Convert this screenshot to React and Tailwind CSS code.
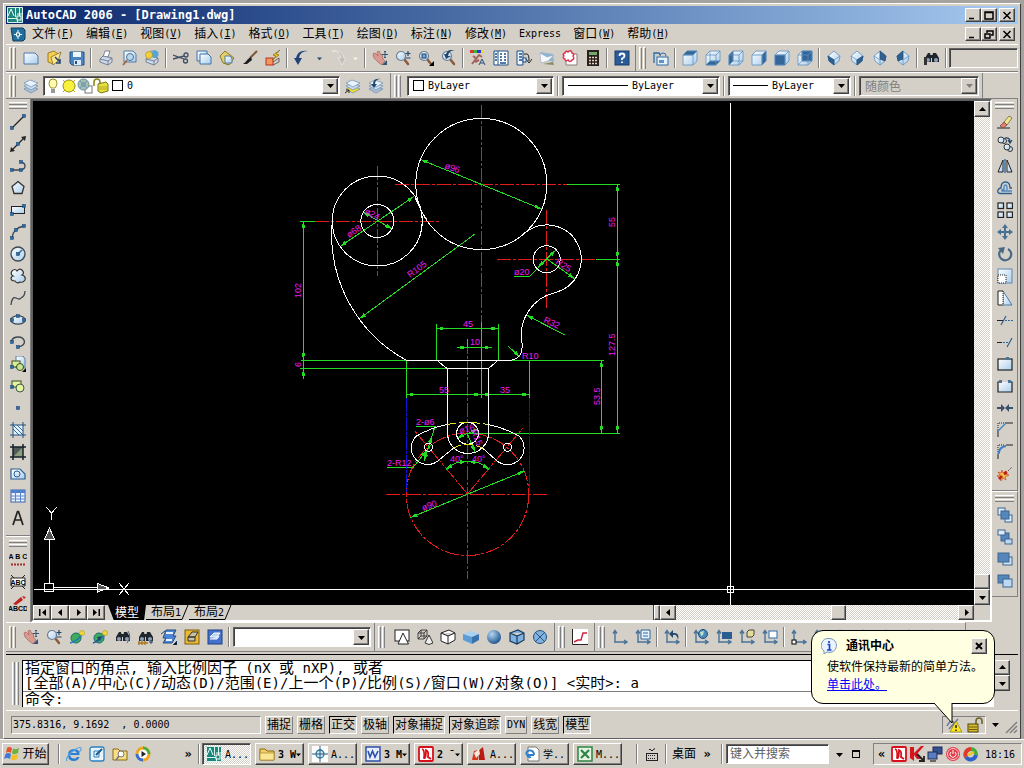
// src/App.jsx
import React from "react";

const raised =
  "border border-t-white border-l-white border-r-[#404040] border-b-[#404040] bg-[#d4d0c8] shadow-[inset_-1px_-1px_0_#808080]";
const sunken =
  "border border-t-[#606060] border-l-[#606060] border-r-white border-b-white shadow-[inset_1px_1px_0_#404040]";
const track =
  "bg-[repeating-conic-gradient(#ffffff_0_25%,#d4d0c8_0_50%)] bg-[length:2px_2px]";

/* ---------- ICON PARTS ---------- */

const Cube = ({ face }) => {
  const faces = {
    top: "1,5 5,1 15,1 11,5",
    bottom: "1,15 5,11 15,11 11,15",
    left: "1,5 5,1 5,11 1,15",
    right: "11,5 15,1 15,11 11,15",
    front: "1,5 11,5 11,15 1,15",
    back: "5,1 15,1 15,11 5,11",
  };
  return (
    <g stroke="#5f8fbd" strokeWidth="0.8" strokeLinejoin="round">
      <path d="M1 5L5 1H15V11L11 15H1Z" fill="url(#ice)" />
      <polygon points={faces[face]} fill="#336699" />
      <path d="M1 5H11V15M11 5L15 1" fill="none" />
      {(face === "bottom" || face === "left" || face === "back") && (
        <path d="M5 1V11H15M5 11L1 15" fill="none" strokeWidth="0.7" />
      )}
    </g>
  );
};

const Iso = ({ face }) => {
  const faces = {
    sw: "2,6 8,10 8,15 3,11",
    se: "8,10 14,6 13,11 8,15",
    ne: "8,1 14,6 13,11 8,9",
    nw: "8,1 2,6 3,11 8,9",
  };
  return (
    <g stroke="#5f8fbd" strokeWidth="0.8" strokeLinejoin="round">
      <path d="M8 1L14 6L13 11L8 15L3 11L2 6Z" fill="url(#ice)" />
      <path d="M2 6L8 10L14 6M8 10V15" fill="none" />
      <polygon points={faces[face]} fill="#2f6090" stroke="#27527d" />
    </g>
  );
};

const Axes = ({ children }) => (
  <g>
    <path
      d="M3 14V2M1 4.500L3 1.500L5 4.500M3 13H14M12 11L15 13L12 15"
      fill="none"
      stroke="#4a7399"
      strokeWidth="1.400"
    />
    {children}
  </g>
);

const Dot = ({ x, y }) => (
  <rect x={x - 1.5} y={y - 1.5} width="3" height="3" fill="#2b6ba8" stroke="#163f66" strokeWidth="0.5" />
);

const Lens = ({ children }) => (
  <g>
    <path d="M9 9L13 14" stroke="#8a5a3a" strokeWidth="2.500" strokeLinecap="round" />
    <circle cx="6" cy="6" r="4.500" fill="url(#ice)" stroke="#6d7f92" strokeWidth="1.200" />
    {children}
  </g>
);

const Hand = () => (
  <g>
    <path d="M1 4L3 3L6 6L5 2L7 1L9 5L10 4L11 9L13 11L10 15L6 12L2 8Z" fill="#d99a90" stroke="#a4605c" strokeWidth="0.7" />
    <path d="M10 15L15 10L15 15Z" fill="#34557a" />
    <path d="M13 1V8M10 4.500H16M12 2L13 1L14 2M12 7L13 8L14 7" stroke="#34557a" fill="none" />
  </g>
);

const Printer = () => (
  <g stroke="#5d6f88" strokeWidth="0.800">
    <path d="M5 7L7 1H12L10 7Z" fill="#fff" />
    <path d="M2 9L5 6L14 8L14 12L10 15L2 12Z" fill="#cfd8e6" />
    <path d="M2 9L10 11L14 8M10 11V15" fill="none" />
  </g>
);

const Binoculars = () => (
  <g fill="#20262e">
    <path d="M1 8L4 3H6L7 8V12H1ZM8 8L9 3H12L15 8V12H8Z" />
    <circle cx="4" cy="10" r="2" fill="#8fa0b5" />
    <circle cx="12" cy="10" r="2" fill="#8fa0b5" />
    <path d="M6 5H10V8H6Z" />
  </g>
);

const Globe = () => (
  <g>
    <circle cx="7" cy="9" r="5" fill="#3cae5a" stroke="#1c6c6c" />
    <path d="M1 14Q9 12 14 4" fill="none" stroke="#2878b8" strokeWidth="1.500" />
    <circle cx="13" cy="4" r="2.500" fill="#eedb3a" stroke="#a88a10" strokeWidth="0.500" />
  </g>
);

const Stack = ({ top }) => (
  <g stroke="#6a8bb0" strokeWidth="0.700">
    <path d="M1 11L7 8L15 11L8 15Z" fill={top || "#aebfd4"} />
    <path d="M1 8L7 5L15 8L8 12Z" fill="#c9dcf0" />
    <path d="M1 5L7 2L15 5L8 9Z" fill="#e8f3fc" />
  </g>
);

const ICONS = {
  new: <path d="M1 3H12L15 6V14H1Z" fill="url(#ice)" stroke="#4f7aa8" />,
  open: (
    <g stroke="#8a6a14" strokeWidth="0.800">
      <path d="M2 3L8 1L12 4L7 14L2 12Z" fill="#f3cf55" />
      <path d="M5 7L15 2L12 11L7 15Z" fill="#fbe694" />
      <path d="M9 7L14 12M14 9V13H10" stroke="#23476e" strokeWidth="1.500" fill="none" />
    </g>
  ),
  save: (
    <g>
      <path d="M1 2H15V15H3L1 13Z" fill="#4b84c4" stroke="#24507f" />
      <rect x="4" y="2" width="8" height="5" fill="#eef6ff" />
      <rect x="5" y="10" width="7" height="5" fill="#dbe8f5" />
      <rect x="6" y="11" width="2" height="3" fill="#24507f" />
    </g>
  ),
  print: <Printer />,
  preview: (
    <g>
      <path d="M3 1H12L15 4V12H3Z" fill="url(#ice)" stroke="#4f7aa8" />
      <circle cx="9" cy="7" r="3.500" fill="#b8d8f0" stroke="#56708c" />
      <path d="M6 10L2 15" stroke="#a06a4a" strokeWidth="2" />
    </g>
  ),
  publish: (
    <g>
      <Printer />
      <circle cx="11" cy="4" r="3.500" fill="#53a6dc" />
      <circle cx="5" cy="5" r="3.500" fill="#f2d13d" stroke="#a68513" strokeWidth="0.600" />
    </g>
  ),
  cut: (
    <g fill="none" stroke="#3f4f66" strokeWidth="1.300">
      <path d="M0 5L11 9M0 9L11 6" />
      <circle cx="13" cy="5" r="2" />
      <circle cx="12.500" cy="11" r="2" />
    </g>
  ),
  copy: (
    <g fill="url(#ice)" stroke="#3f74aa">
      <path d="M1 1H11V11H1Z" />
      <path d="M4 4H12L15 7V14H4Z" />
    </g>
  ),
  paste: (
    <g>
      <path d="M1 6L6 1L15 8L10 15L4 13Z" fill="#e3cf67" stroke="#8d7a24" />
      <path d="M6 6H11L13 8V13H6Z" fill="url(#ice)" stroke="#4f7aa8" />
    </g>
  ),
  match: (
    <g>
      <path d="M15 1L8 8" stroke="#7d5a3a" strokeWidth="2.200" />
      <path d="M9 7L10 10L5 14L1 14Q4 12 6 9Z" fill="#1d1d1d" />
    </g>
  ),
  block: (
    <g>
      <rect x="1" y="8" width="7" height="7" fill="#f5945e" stroke="#b8331c" />
      <path d="M15 0L8 5L11 6L7 10L14 5L11 4Z" fill="#f8d11e" stroke="#7d6a0a" strokeWidth="0.700" />
      <path d="M8 12L14 8V12L8 15" fill="none" stroke="#333" strokeWidth="0.700" />
    </g>
  ),
  undo: <path d="M14 1Q6 1 5 8H8L4 15L0 8H2Q4 -1 14 1Z" fill="#1f4379" />,
  redo: <path d="M2 1Q10 1 11 8H8L12 15L16 8H14Q12 -1 2 1Z" fill="#c2c0bb" stroke="#f4f4f2" strokeWidth="0.600" />,
  pan: <Hand />,
  zoom: (
    <Lens>
      <path d="M13 1V6M10.500 3.500H15.500M10.500 8H15.500" stroke="#23476e" strokeWidth="1.200" />
    </Lens>
  ),
  zoomWin: (
    <Lens>
      <rect x="4" y="4" width="4" height="4" fill="#6fa8dc" stroke="#23476e" />
      <path d="M16 11V16H11Z" fill="#000" />
    </Lens>
  ),
  zoomPrev: (
    <Lens>
      <path d="M14 1Q8 0 7 6H10L5 9L3 4H5Q7 -2 14 1Z" fill="#23476e" />
    </Lens>
  ),
  props: (
    <g>
      <rect x="0" y="0" width="4" height="3" fill="#d33" />
      <rect x="4" y="0" width="3" height="3" fill="#3b3" />
      <rect x="7" y="0" width="4" height="3" fill="#33d" />
      <rect x="11" y="0" width="3" height="3" fill="#ed2" />
      <path d="M2 14L9 5L12 7M3 6L7 9M5 12L9 10" stroke="#a7615a" strokeWidth="2" fill="none" />
      <path d="M9 15L12 9L15 15M10 13H14" fill="none" stroke="#2e4e7e" />
    </g>
  ),
  center: (
    <g fill="#fff" stroke="#1d4f86">
      <path d="M1 1H15V15H1ZM5 1V15" />
      <path d="M7 4H9M11 4H13M7 7H9M11 7H13M7 10H9M11 10H13M2 4H4M2 7H4M2 10H4M7 13H13" strokeWidth="1.300" />
    </g>
  ),
  palette: (
    <g fill="#eaf4ff" stroke="#1d4f86">
      <path d="M1 1H7V15H1Z" />
      <path d="M3 4H6M3 7H6M3 10H6" strokeWidth="1.500" />
      <path d="M8 4H11Q13 4 13 11M10 9L13 13L16 9" fill="none" stroke="#222" />
      <rect x="7" y="8" width="3" height="4" />
    </g>
  ),
  sheet: (
    <g>
      <path d="M1 2L14 4L15 12L3 9Z" fill="#8fb4d4" />
      <path d="M1 3L8 7L15 5L9 11L2 13Z" fill="#f5fafc" stroke="#8a9db0" strokeWidth="0.500" />
      <path d="M4 14L14 12L15 15Z" fill="#8a8a68" />
    </g>
  ),
  markup: (
    <g>
      <path d="M4 4H15V15H4Z" fill="#fff" stroke="#8d7b7b" />
      <path d="M3 3Q4 0 6 2Q9 -1 10 3Q13 4 11 6Q13 9 10 10Q8 13 6 10Q3 12 3 9Q0 8 2 6Q0 4 3 3Z" fill="#fff" stroke="#e0304a" strokeWidth="1.400" />
    </g>
  ),
  calc: (
    <g>
      <rect x="2" y="0" width="12" height="16" fill="#26211f" />
      <rect x="4" y="2" width="8" height="3" fill="#73a86c" />
      <path d="M4 7.500H12M4 10.500H12M4 13.500H12" stroke="#f0d0c0" strokeWidth="1.500" strokeDasharray="2 1" />
    </g>
  ),
  help: (
    <g>
      <rect x="1" y="1" width="14" height="14" fill="#2a5d98" stroke="#163f6b" />
      <path d="M5.500 6Q5.500 3.500 8 3.500Q10.500 3.500 10.500 6Q10.500 7.500 8 8.500V10M8 11.500V13" fill="none" stroke="#fff" strokeWidth="1.800" />
    </g>
  ),
  views: (
    <g>
      <path d="M1 13V3H6L7 5" fill="none" stroke="#2b6ba8" strokeWidth="1.300" />
      <rect x="4" y="7" width="11" height="8" fill="#e5f1fb" stroke="#2b6ba8" />
      <path d="M7 6Q7 3 10 3T13 6" fill="none" stroke="#2b6ba8" />
      <rect x="6" y="10" width="5" height="3" fill="#5d94c8" />
    </g>
  ),
  vTop: <Cube face="top" />,
  vBottom: <Cube face="bottom" />,
  vLeft: <Cube face="left" />,
  vRight: <Cube face="right" />,
  vFront: <Cube face="front" />,
  vBack: <Cube face="back" />,
  isoSW: <Iso face="sw" />,
  isoSE: <Iso face="se" />,
  isoNE: <Iso face="ne" />,
  isoNW: <Iso face="nw" />,
  camera: (
    <g>
      <Binoculars />
      <path d="M0 7H3V15H0Z" fill="#333" />
    </g>
  ),
  layers: <Stack />,
  layerMake: (
    <g>
      <Stack top="#f3dc2c" />
      <path d="M0 15L4 12M1 12H4V15" stroke="#222" fill="none" />
    </g>
  ),
  layerPrev: (
    <g>
      <Stack />
      <path d="M13 1Q7 1 7 6H9L6 10L3 6H5Q5 0 13 1Z" fill="#23476e" />
    </g>
  ),
  bulb: (
    <g>
      <path d="M8 1Q12 1 12 5Q12 8 10 10H6Q4 8 4 5Q4 1 8 1Z" fill="#fffbb0" stroke="#a28f28" />
      <path d="M6 12H10M6 14H10" stroke="#777" strokeWidth="1.500" />
    </g>
  ),
  sun: (
    <g>
      <path d="M2 2L14 14M14 2L2 14" stroke="#c2a90c" />
      <circle cx="8" cy="8" r="6" fill="#f7f03c" stroke="#93901d" />
    </g>
  ),
  freeze: (
    <g>
      <rect x="8" y="8" width="7" height="7" fill="#fff" stroke="#777" />
      <circle cx="6.500" cy="6.500" r="5.500" fill="#a3bfb8" stroke="#6f9096" />
      <path d="M3 3L10 10M10 3L3 10" stroke="#6e97af" />
      <circle cx="6.500" cy="6.500" r="2.500" fill="#7ea0ac" />
    </g>
  ),
  lock: (
    <g>
      <path d="M1 8V4Q1 1 4 1T7 4V6" fill="none" stroke="#8f8a1c" strokeWidth="1.600" />
      <path d="M5 6L13 4L15 6V13L8 15L5 13Z" fill="#e8e03a" stroke="#7d7714" />
      <path d="M6 9H14M6 11H14" stroke="#9d961c" strokeWidth="0.700" />
    </g>
  ),
  line: (
    <g>
      <path d="M2 14L14 2" stroke="#222" strokeWidth="1.300" />
      <Dot x={2} y={14} />
      <Dot x={14} y={2} />
    </g>
  ),
  xline: (
    <g>
      <path d="M2 14L14 2" stroke="#222" strokeWidth="1.300" />
      <path d="M0 16L1 11L5 15ZM16 0L11 1L15 5Z" fill="#222" />
      <Dot x={8} y={8} />
    </g>
  ),
  pline: (
    <g>
      <path d="M1 12H11M11 12Q15 11 15 8T11 4" fill="none" stroke="#3d4650" strokeWidth="1.300" />
      <Dot x={2} y={12} />
      <Dot x={11} y={12} />
      <Dot x={11} y={4} />
    </g>
  ),
  polygon: <path d="M8 1.500L14 6.500L12 13.500H4L2 6.500Z" fill="url(#ice)" stroke="#333" strokeWidth="1.300" />,
  rect: (
    <g>
      <rect x="1.500" y="4.500" width="13" height="7" fill="url(#ice)" stroke="#222" />
      <Dot x={2} y={12} />
      <Dot x={14} y={4} />
    </g>
  ),
  arc: (
    <g>
      <path d="M2 14Q3 4 14 2" fill="none" stroke="#3d4650" strokeWidth="1.300" />
      <Dot x={2} y={14} />
      <Dot x={6} y={6} />
      <Dot x={14} y={2} />
    </g>
  ),
  circle: (
    <g>
      <circle cx="8" cy="8" r="7" fill="url(#ice)" stroke="#3d4650" strokeWidth="1.300" />
      <path d="M8 8L12 4" stroke="#2b6ba8" strokeWidth="1.400" />
      <Dot x={8} y={8} />
    </g>
  ),
  cloud: (
    <path d="M3 8Q0 6 2 3Q5 0 7 3Q9 0 12 2Q15 5 12 7Q16 8 15 12Q13 15 10 14Q7 16 5 13Q1 13 1 10Q2 8 3 8Z" fill="url(#ice)" stroke="#333" strokeWidth="1.200" />
  ),
  spline: <path d="M1 15Q2 6 6 8T11 8Q15 6 15 1" fill="none" stroke="#3d4650" strokeWidth="1.300" />,
  ellipse: (
    <g>
      <ellipse cx="8" cy="8" rx="7" ry="4.200" fill="url(#ice)" stroke="#3d4650" strokeWidth="1.300" />
      <Dot x={2} y={8} />
      <Dot x={14} y={8} />
      <Dot x={8} y={4} />
    </g>
  ),
  earc: (
    <g>
      <path d="M1.500 7Q3 3 8 3Q14 3 14.500 8Q14 12 8 13" fill="none" stroke="#3d4650" strokeWidth="1.400" />
      <Dot x={2} y={8} />
      <Dot x={8} y={13} />
    </g>
  ),
  insert: (
    <g>
      <path d="M6 0H13L15 3V12H6Z" fill="url(#ice)" stroke="#5f7ea0" />
      <rect x="2" y="5" width="8" height="6" fill="#d8f09a" stroke="#3b4d20" />
      <circle cx="10" cy="11" r="3.500" fill="#c9e68c" stroke="#3b4d20" />
      <Dot x={2} y={11} />
      <path d="M16 12V16H12Z" />
    </g>
  ),
  mkblock: (
    <g>
      <rect x="2" y="3" width="9" height="6" fill="#e3f3a2" stroke="#3b4d20" />
      <circle cx="10" cy="10" r="4" fill="#e3f3a2" stroke="#3b5a50" />
      <Dot x={2} y={9} />
    </g>
  ),
  point: <Dot x={8} y={8} />,
  hatch: (
    <g>
      <rect x="3" y="3" width="10" height="10" fill="#e8f4fd" />
      <path d="M3 7L9 13M3 3L13 13M7 3L13 9" stroke="#2b6ba8" />
      <path d="M0 3H16M0 13H16M3 0V16M13 0V16" stroke="#1f4f80" />
    </g>
  ),
  gradient: (
    <g>
      <rect x="3" y="3" width="10" height="10" fill="#4d5c58" />
      <path d="M3 13L13 3V13Z" fill="#8c9c7c" />
      <path d="M0 3H16M0 13H16M3 0V16M13 0V16" stroke="#16202c" strokeWidth="1.500" />
    </g>
  ),
  region: (
    <g>
      <path d="M1 3H10L15 8V13H1Z" fill="url(#ice)" stroke="#2b5e92" strokeWidth="1.200" />
      <circle cx="7" cy="8" r="3" fill="none" stroke="#2b5e92" />
    </g>
  ),
  table: (
    <g>
      <rect x="1" y="2" width="14" height="12" fill="#eaf3ff" stroke="#3a62b0" />
      <rect x="1" y="2" width="14" height="3" fill="#4f7fd0" />
      <path d="M1 8H15M1 11H15M5.500 2V14M10.500 2V14" stroke="#5b86cc" />
    </g>
  ),
  mtext: <path d="M3 15L7.500 1.500H8.500L13 15M5 10H11" fill="none" stroke="#222" strokeWidth="1.700" />,
  erase: (
    <g>
      <path d="M0 14H13" stroke="#222" />
      <path d="M7 8L12 2L15 4L10 11Z" fill="#f0e58a" stroke="#5c5a30" strokeWidth="0.700" />
      <path d="M7 8L10 11L6 14L3 12Z" fill="#e07f72" stroke="#6b3a34" strokeWidth="0.700" />
    </g>
  ),
  copyObj: (
    <g fill="url(#ice)" stroke="#333">
      <circle cx="7" cy="5" r="2.500" />
      <circle cx="4" cy="4" r="3" />
      <circle cx="13" cy="13" r="2.500" />
      <circle cx="10" cy="11" r="3" />
      <path d="M8 2Q13 1 13 6M11 4L13 7L15 4" fill="none" stroke="#23476e" strokeWidth="1.300" />
    </g>
  ),
  mirror: (
    <g>
      <path d="M6 2V14H1Z" fill="url(#ice)" stroke="#222" />
      <path d="M10 2V14H15Z" fill="url(#ice)" stroke="#222" />
      <path d="M8 1V15" stroke="#2b6ba8" strokeWidth="1.400" />
    </g>
  ),
  offset: (
    <g fill="none" stroke="#2b5e92" strokeWidth="1.300">
      <path d="M15 13.500H3Q0 13 1 10Q2 8 4 8Q4 2 8.500 2T13 8H15" />
      <path d="M15 11H5Q4 10 7 9.500V7Q7 5 8.500 5T10 7V10" stroke="#4b86c0" />
    </g>
  ),
  array: (
    <g fill="url(#ice)" stroke="#222" strokeWidth="1.200">
      <rect x="1" y="1" width="5.500" height="5.500" />
      <rect x="10" y="1" width="5.500" height="5.500" />
      <rect x="1" y="10" width="5.500" height="5.500" />
      <rect x="10" y="10" width="5.500" height="5.500" />
    </g>
  ),
  move: (
    <g fill="#4a6f95">
      <path d="M7 3H9V13H7ZM3 7H13V9H3Z" />
      <path d="M8 0L11 4H5ZM8 16L11 12H5ZM0 8L4 5V11ZM16 8L12 5V11Z" />
    </g>
  ),
  rotate: (
    <g>
      <path d="M11 3A6 6 0 1 1 4 4" fill="none" stroke="#4a6884" strokeWidth="2.200" />
      <path d="M1 2L8 1L6 8Z" fill="#4a6884" />
    </g>
  ),
  scale: (
    <g>
      <rect x="1" y="1" width="14" height="14" fill="url(#ice)" stroke="#5c88b0" />
      <rect x="1" y="7" width="8" height="8" fill="#fff" stroke="#222" strokeDasharray="1 1" />
    </g>
  ),
  stretch: (
    <g>
      <path d="M6 1L15 15H6Z" fill="url(#ice)" stroke="#4b7cab" />
      <path d="M6 1H1V15H6" fill="#fff" stroke="#222" />
      <path d="M6 1V15" stroke="#222" strokeDasharray="1 1" />
    </g>
  ),
  trim: (
    <g>
      <path d="M0 8.500H6" stroke="#222" />
      <path d="M8 8.500H16" stroke="#2b6ba8" strokeDasharray="2 1" />
      <path d="M4 13L9 4" stroke="#2b5e92" strokeWidth="1.200" />
    </g>
  ),
  extend: (
    <g>
      <path d="M0 8.500H5" stroke="#222" />
      <path d="M6 8.500H11" stroke="#2b6ba8" strokeDasharray="2 1" />
      <path d="M10 13L15 4" stroke="#2b5e92" strokeWidth="1.200" />
    </g>
  ),
  breakPt: (
    <g>
      <rect x="1" y="3" width="14" height="11" fill="url(#ice)" stroke="#222" strokeWidth="1.200" />
      <rect x="9" y="1" width="3" height="3" fill="#4a7399" />
    </g>
  ),
  breakObj: (
    <g>
      <path d="M3 4H1V14H15V4H13" fill="url(#ice)" stroke="#222" strokeWidth="1.200" />
      <rect x="2" y="2" width="3" height="3" fill="#4a7399" />
      <rect x="11" y="2" width="3" height="3" fill="#4a7399" />
    </g>
  ),
  join: (
    <g fill="#3b5168">
      <path d="M0 7H4V4L8 8L4 12V9H0ZM16 7H12V4L8 8L12 12V9H16Z" />
    </g>
  ),
  chamfer: (
    <g fill="none" stroke="#222">
      <path d="M1 8V1H8" strokeDasharray="1 1" />
      <path d="M1 8V15M8 1H16" />
      <path d="M1 9L9 1" stroke="#4a86c0" strokeWidth="1.500" />
    </g>
  ),
  fillet: (
    <g fill="none" stroke="#222">
      <path d="M1 8V1H8" strokeDasharray="1 1" />
      <path d="M1 10V15M9 1H16" />
      <path d="M1.500 10Q2 3 9 2" stroke="#3f7fc4" strokeWidth="2.200" />
    </g>
  ),
  explode: (
    <g>
      <path d="M5 4L6 7L9 5L8 8L12 9L8 11L9 14L6 12L4 15L3 12L0 10L3 9L1 6L4 7Z" fill="#f0c04a" stroke="#d2552c" strokeWidth="0.800" />
      <path d="M2 13L5 10M7 8L10 6" stroke="#b8201c" strokeWidth="2.800" />
      <path d="M11 5L15 1" stroke="#555" strokeDasharray="2 1" />
    </g>
  ),
  front: (
    <g stroke="#3e6590">
      <rect x="1" y="1" width="7" height="7" fill="#dcecf9" />
      <rect x="8" y="8" width="7" height="7" fill="#dcecf9" />
      <rect x="4" y="4" width="8" height="8" fill="#5587bd" />
    </g>
  ),
  back: (
    <g stroke="#3e6590">
      <rect x="4" y="4" width="8" height="8" fill="#5587bd" />
      <rect x="1" y="1" width="7" height="5" fill="#dcecf9" />
      <rect x="8" y="10" width="7" height="5" fill="#bcd9f1" />
    </g>
  ),
  above: (
    <g stroke="#3e6590">
      <rect x="6" y="6" width="9" height="8" fill="#cfe3f5" />
      <rect x="1" y="2" width="11" height="9" fill="#5587bd" />
    </g>
  ),
  under: (
    <g stroke="#3e6590">
      <rect x="1" y="2" width="11" height="8" fill="#5587bd" />
      <rect x="6" y="6" width="9" height="8" fill="#bcd9f1" />
    </g>
  ),
  globe: <Globe />,
  globe2: (
    <g>
      <Globe />
      <path d="M0 15L6 10L5 8L10 7L8 12L7 11Z" fill="#23476e" />
    </g>
  ),
  swivel: (
    <g>
      <Binoculars />
      <path d="M13 2Q17 8 12 14" fill="none" stroke="#4a6884" />
    </g>
  ),
  distance: (
    <g>
      <Binoculars />
      <path d="M0 14H10M1 12V16M4 12V16M7 12V16" stroke="#a87820" strokeWidth="1.300" />
      <path d="M11 13H15M13 11V15" stroke="#23476e" />
    </g>
  ),
  orbit: (
    <g>
      <path d="M5 1H15L12 7H15L11 14H2L5 9H2Z" fill="#4c86d8" stroke="#24507f" />
      <path d="M5 4H12M5 11H11" stroke="#e8f2ff" strokeWidth="2" />
      <path d="M0 5L4 2M16 12V16H12Z" stroke="#23476e" />
    </g>
  ),
  clip: (
    <g>
      <rect x="1" y="1" width="14" height="14" fill="#eab833" stroke="#7a5c0a" />
      <path d="M4 8L8 3H14L11 8ZM4 8H11V12H4Z" fill="#c8c2a0" stroke="#333" />
    </g>
  ),
  plane: (
    <g>
      <rect x="1" y="1" width="14" height="14" fill="#4572cc" stroke="#1f3f86" />
      <path d="M3 8L7 4H13L10 8ZM3 10H10L12 7" fill="#bcd3f6" stroke="#fff" />
    </g>
  ),
  wire2d: (
    <g fill="#fff" stroke="#222">
      <rect x="1" y="1" width="14" height="11" />
      <path d="M9 4L14.500 15H4Z" />
    </g>
  ),
  wire3d: (
    <g fill="none" stroke="#333">
      <path d="M1 4L4 1H10V7L7 10H1ZM1 4H7V10M7 4L10 1M4 1V7H10M4 7L1 10" strokeWidth="0.900" />
      <path d="M12 6L16 14Q12 17 8 14Z" fill="#eee" />
    </g>
  ),
  hidden: <path d="M1 4L9 1L15 4V11L8 15L1 12ZM1 4L8 7L15 4M8 7V15" fill="#fff" stroke="#222" />,
  flat: (
    <g>
      <path d="M0 5L8 2L16 5L9 8Z" fill="#a7d0f2" />
      <path d="M0 5L9 8V15L0 11Z" fill="#5b9bd6" />
      <path d="M16 5L9 8V15L16 11Z" fill="#3873b0" />
    </g>
  ),
  gouraud: <circle cx="8" cy="8" r="7" fill="url(#ball)" />,
  flatEdge: <path d="M1 4L9 1L15 4V11L8 15L1 12ZM1 4L8 7L15 4M8 7V15" fill="#7fb2de" stroke="#173a5e" strokeWidth="1.200" />,
  gouraudEdge: (
    <g stroke="#27527d" fill="none">
      <circle cx="8" cy="8" r="6.500" fill="#7fb2de" />
      <path d="M3 3L13 13M13 3L3 13" />
    </g>
  ),
  chart: (
    <g>
      <rect x="0" y="0" width="16" height="16" fill="#fff" />
      <path d="M0.500 0V15.500H16" stroke="#222" fill="none" />
      <path d="M2 13L6 11H9L11 4H15" fill="none" stroke="#d3203a" strokeWidth="1.400" />
    </g>
  ),
  ucs: <Axes />,
  ucsDlg: (
    <Axes>
      <path d="M6 1H15V10H6Z" fill="#eaf3fc" stroke="#2b6ba8" />
      <path d="M8 4H13M8 7H13" stroke="#2b6ba8" />
    </Axes>
  ),
  ucsPrev: (
    <Axes>
      <path d="M14 11Q16 3 9 4V1L5 5L9 9V6Q13 5 14 11Z" fill="#23476e" />
    </Axes>
  ),
  ucsWorld: (
    <Axes>
      <circle cx="10" cy="5" r="4.500" fill="#4a8bb8" stroke="#1f4f80" />
      <path d="M7 3L11 2L10 6L8 7Z" fill="#bfe2c8" />
    </Axes>
  ),
  ucsObj: (
    <Axes>
      <rect x="6" y="3" width="10" height="7" fill="#2b5e92" />
    </Axes>
  ),
  ucsFace: (
    <Axes>
      <path d="M8 3L10 1H15V6L13 8H8Z" fill="#e6dc9a" stroke="#444" />
    </Axes>
  ),
  ucsView: (
    <Axes>
      <rect x="7" y="2" width="8" height="7" fill="#fff" stroke="#2b6ba8" />
    </Axes>
  ),
  ucsOrigin: (
    <Axes>
      <rect x="1" y="11" width="4" height="4" fill="#fff" stroke="#000" />
    </Axes>
  ),
  acad: (
    <g>
      <rect width="16" height="16" fill="#1d857a" />
      <path d="M0.500 0.500H15.500V15.500H0.500ZM0 11.500H10M8.500 0V10M10.500 11V16" fill="none" stroke="#d8f2ec" />
      <path d="M1 9L4 2L7 9M12.500 1V10M10 7H16" fill="none" stroke="#e8fffa" />
      <rect x="10" y="9" width="4" height="4" fill="#1d857a" stroke="#fff" />
    </g>
  ),
  dwg: (
    <g>
      <path d="M1 2H13L15 4V13L13 15H3Z" fill="#1f6e9c" stroke="#123f60" />
      <path d="M8 4V13M4 8.500H12" stroke="#fff" />
      <rect x="6.500" y="7" width="3" height="3" fill="#1f6e9c" stroke="#fff" />
    </g>
  ),
  flag: (
    <g>
      <path d="M3 2Q5 0 8 2L7 7Q4 5 2 7Z" fill="#e8502a" />
      <path d="M9 2.500Q12 4 15 2L14 7Q11 9 8 7.500Z" fill="#6cb33e" />
      <path d="M1.500 8Q4 6 7 8L6 13Q3 11 0 13Z" fill="#3f7ad8" />
      <path d="M8 8.500Q11 10 14 8L13 13Q10 15 7 13.500Z" fill="#f2c21e" />
    </g>
  ),
  ie: (
    <g>
      <path d="M13.500 9H4Q5 12.500 8 12.500Q10 12.500 11 11H13.500Q12 15 8 15Q2 15 2 9Q2 3 8 3Q14 3 13.500 9ZM4.500 7H11Q10 5 8 5Q5 5 4.500 7Z" fill="#2a7fd2" />
      <path d="M1 15Q-1 12 6 6Q13 0 15 2Q16 4 13 6" fill="none" stroke="#52a5e4" strokeWidth="1.200" />
    </g>
  ),
  desk: (
    <g>
      <rect x="1" y="1" width="14" height="14" rx="2" fill="#e9f4fc" stroke="#2b7fbf" strokeWidth="1.300" />
      <path d="M5 5H10V11H5Z" fill="none" stroke="#2b7fbf" />
      <path d="M7 9L13 3" stroke="#1d5a92" strokeWidth="2" />
    </g>
  ),
  folder: (
    <g>
      <path d="M1 3H6L8 5H15V14H1Z" fill="#f3cf62" stroke="#8a6a14" />
      <path d="M1 7H15V14H1Z" fill="#fbe694" stroke="#a88728" strokeWidth="0.700" />
    </g>
  ),
  folderFind: (
    <g>
      <path d="M1 3H6L8 5H15V14H1Z" fill="#f8df86" stroke="#8a6a14" />
      <circle cx="9" cy="8" r="3" fill="#fff" stroke="#777" />
      <path d="M7 10L4 14" stroke="#777" strokeWidth="1.500" />
    </g>
  ),
  media: (
    <g>
      <circle cx="8" cy="8" r="7.500" fill="#f2a51f" />
      <path d="M8 0.500A7.500 7.500 0 0 1 15.500 8H8Z" fill="#4fae3b" />
      <path d="M0.500 8A7.500 7.500 0 0 0 8 15.500V8Z" fill="#3a6fd0" />
      <circle cx="8" cy="8" r="4.500" fill="#fff" />
      <path d="M6.500 5L11 8L6.500 11Z" fill="#222" />
    </g>
  ),
  target: (
    <g>
      <rect width="16" height="16" fill="#fff" />
      <circle cx="8" cy="8" r="4" fill="#d0e6ee" stroke="#2b7a96" strokeWidth="1.300" />
      <path d="M8 0V16M0 8H16" stroke="#2b5a86" />
    </g>
  ),
  word: (
    <g>
      <rect x="1" y="1" width="14" height="14" fill="#e8effc" stroke="#2b4fa8" strokeWidth="1.500" />
      <path d="M3 5L5 11L7.500 5L10 11L13 5" fill="none" stroke="#2b4fa8" strokeWidth="1.600" />
    </g>
  ),
  acro: (
    <g>
      <rect x="1" y="1" width="14" height="14" rx="1" fill="#fff" stroke="#d8101c" strokeWidth="1.800" />
      <path d="M4 3Q7 4 6 12Q8 13 8 4Q11 5 10 11L13 13" fill="none" stroke="#d8101c" strokeWidth="1.800" />
    </g>
  ),
  flame: (
    <g>
      <path d="M1 14L3 5L7 4V14Z" fill="#d8341c" />
      <path d="M8 14L7 5L12 1L14 14Z" fill="#b81c14" />
      <path d="M3 7L8 3L9 8L5 12Z" fill="#f4e8dc" />
    </g>
  ),
  page: (
    <g>
      <path d="M4 1H12L15 4V15H4Z" fill="#fff" stroke="#777" />
      <path d="M10 9H3Q4 12 7 11M2 8Q3 4 6.500 4.500T10 9" fill="none" stroke="#2a7fd2" strokeWidth="1.800" />
    </g>
  ),
  excel: (
    <g>
      <rect x="1" y="1" width="14" height="14" fill="#e6f4e6" stroke="#2c8540" strokeWidth="1.500" />
      <path d="M4 4L12 12M12 4L4 12" stroke="#2c8540" strokeWidth="2.200" />
    </g>
  ),
  keyboard: (
    <g fill="none" stroke="#222">
      <rect x="2.500" y="7.500" width="11" height="7" />
      <path d="M4 9.500H12M4 12.500H12" strokeDasharray="1 1" />
      <path d="M5 4Q6 2 7 4T9 4T11 3" />
    </g>
  ),
  kis: (
    <g>
      <path d="M1 1H5V7L12 0H15L8 8L12 13H8L5 9V15L1 12Z" fill="#d8141c" />
      <path d="M8 8L15 15M15 10V15H10" fill="none" stroke="#222" strokeWidth="1.800" />
    </g>
  ),
  net: (
    <g>
      <rect x="6" y="1" width="9" height="7" fill="#34508e" stroke="#1c2c55" />
      <rect x="1" y="6" width="9" height="7" fill="#5b7cc0" stroke="#1c2c55" />
      <path d="M3 15H9" stroke="#444" strokeWidth="1.500" />
    </g>
  ),
  power: (
    <g>
      <circle cx="8" cy="8" r="7" fill="#e23c48" />
      <circle cx="8" cy="8" r="5.500" fill="none" stroke="#f8c8c8" />
      <path d="M6 6A3 3 0 1 0 10 6M8 4V8" fill="none" stroke="#fff" />
    </g>
  ),
  swirl: (
    <g fill="none" strokeWidth="4">
      <path d="M3 11A5.500 5.500 0 0 1 8 3" stroke="#dd3a2a" />
      <path d="M8 3A5.500 5.500 0 0 1 13 9" stroke="#3fae3b" />
      <path d="M13 9A5.500 5.500 0 0 1 3 11" stroke="#2e62c8" />
      <path d="M5 9L11 6" stroke="#f2c21e" strokeWidth="2.500" />
    </g>
  ),
  info: (
    <g>
      <path d="M8 0.500A7 7 0 1 1 6 14L3 16V13A7 7 0 0 1 8 0.500Z" fill="#eaf3ff" stroke="#7a96bc" />
      <path d="M8 3V5M6.500 6.500H8.500V12M6 12H10.500" stroke="#1c46c8" strokeWidth="1.700" fill="none" />
    </g>
  ),
  warn: (
    <g>
      <path d="M1 9Q5 1 8 6M3 12L12 2" stroke="#6a7890" strokeWidth="1.500" fill="none" />
      <path d="M10 4L16 15H4Z" fill="#fbe51c" stroke="#8a7a10" strokeWidth="0.700" />
      <path d="M10 8V11M10 12.500V14" stroke="#222" strokeWidth="1.500" />
    </g>
  ),
  padlock: (
    <g>
      <path d="M9 8V4Q9 1 12 1T15 4V7" fill="none" stroke="#6d6428" strokeWidth="1.600" />
      <rect x="1" y="7" width="10" height="8" fill="#d8bc2c" stroke="#4c430c" />
      <path d="M2 10H10M2 12.500H10" stroke="#4c430c" strokeWidth="0.800" />
    </g>
  ),
};

const Icon = ({ name }) => (
  <svg width="16" height="16" viewBox="0 0 16 16" className="shrink-0" aria-hidden="true">
    {ICONS[name]}
  </svg>
);

/* ---------- SMALL CONTROLS ---------- */

const Tool = ({ name }) => (
  <button aria-label={name} className="w-[23px] h-[22px] shrink-0 flex items-center justify-center">
    <Icon name={name} />
  </button>
);

const Sep = ({ wide }) => (
  <span
    className={`w-px h-5 shrink-0 bg-[#808080] border-r border-white box-content ${wide ? "mx-[3px]" : "mx-[2px]"}`}
  />
);

const Grip = () => (
  <span className="flex shrink-0 gap-px mx-[3px]">
    <span className="w-[3px] h-[22px] border-l border-t border-white border-r border-r-[#808080]" />
    <span className="w-[3px] h-[22px] border-l border-t border-white border-r border-r-[#808080]" />
  </span>
);

const GripH = () => (
  <span className="flex shrink-0 flex-col gap-px my-[2px] mx-[3px]">
    <span className="h-[3px] border-t border-white border-b border-b-[#808080]" />
    <span className="h-[3px] border-t border-white border-b border-b-[#808080]" />
  </span>
);

// "|" puts a separator between the tools
const Tools = ({ list }) =>
  list.split(" ").map((n, i) => (n === "|" ? <Sep key={i} /> : <Tool key={i} name={n} />));

const Arrow = ({ dir = "down", className = "" }) => {
  const d = {
    down: "M0 2H7L3.500 6Z",
    up: "M0 5H7L3.500 1Z",
    left: "M5 0V7L1 3.500Z",
    right: "M2 0V7L6 3.500Z",
    first: "M0 0H1.500V7H0ZM7 0V7L3 3.500Z",
    last: "M5.500 0H7V7H5.500ZM0 0V7L4 3.500Z",
  };
  return (
    <svg width="7" height="7" viewBox="0 0 7 7" className={className} aria-hidden="true">
      <path d={d[dir]} fill="currentColor" />
    </svg>
  );
};

const DropArrow = ({ muted }) => (
  <span
    className={`w-4 self-stretch shrink-0 flex items-center justify-center pointer-events-none ${raised} ${
      muted ? "text-[#808080]" : "text-black"
    }`}
  >
    <Arrow />
  </span>
);

const Combo = ({ label, value, className, muted, children }) => (
  <label className={`h-5 flex items-center p-px shrink-0 ${sunken} ${muted ? "bg-[#d4d0c8]" : "bg-white"} ${className}`}>
    {children}
    <select
      aria-label={label}
      disabled={muted}
      className={`appearance-none flex-1 min-w-0 h-full pl-1 bg-transparent outline-none ${
        muted ? "text-[12px] text-[#808080]" : "text-[10px]"
      }`}
    >
      <option>{value}</option>
    </select>
    <DropArrow muted={muted} />
  </label>
);

const WinButton = ({ label, d }) => (
  <button aria-label={label} className={`w-4 h-[14px] flex items-center justify-center ${raised}`}>
    <svg width="10" height="9" viewBox="0 0 10 9" aria-hidden="true">
      <path d={d} fill="none" stroke="#000" strokeWidth="1.500" />
    </svg>
  </button>
);

const MIN = "M1 7.500H6";
const MAX = "M1 1H9V8H1ZM1 1.500H9";
const RESTORE = "M3 3V1H9V5H7M1 4H6V8H1Z";
const CLOSE = "M1.500 1L8.500 8M8.500 1L1.500 8";

/* ---------- DRAWING ---------- */

const Arw = ({ x, y, a }) => (
  <path d="M0 0L-7 -2L-7 2Z" fill="#22dd22" transform={`translate(${x} ${y}) rotate(${a})`} />
);

// dimension line with an arrow head at both ends
const Dim = ({ x1, y1, x2, y2 }) => {
  const a = (Math.atan2(y2 - y1, x2 - x1) * 180) / Math.PI;
  return (
    <g>
      <line x1={x1} y1={y1} x2={x2} y2={y2} stroke="#22dd22" />
      <Arw x={x2} y={y2} a={a} />
      <Arw x={x1} y={y1} a={a + 180} />
    </g>
  );
};

const labels = [
  ["ø96", 444, 168, 20],
  ["ø68", 349, 238, -34],
  ["ø24", 364, 213, 28],
  ["R105", 410, 278, -36],
  ["ø20", 514, 275, 0],
  ["R25", 555, 263, 34],
  ["R32", 543, 322, 25],
  ["R10", 522, 359, 0],
  ["45", 463, 327, 0],
  ["10", 470, 345, 0],
  ["55", 439, 393, 0],
  ["35", 500, 393, 0],
  ["2-ø6", 416, 425, 0],
  ["2-R12", 387, 466, 0],
  ["40°", 450, 462, 0],
  ["40°", 472, 462, 0],
  ["ø90", 423, 511, -20],
  ["ø16", 460, 434, -15],
  ["R15", 471, 431, 68],
  ["102", 301, 298, -90],
  ["6", 301, 367, -90],
  ["55", 615, 227, -90],
  ["127.5", 615, 356, -90],
  ["53.5", 600, 405, -90],
];

function Drawing() {
  return (
    <svg className="block w-full h-full bg-black" aria-label="Drawing1.dwg">
      <g transform="translate(-33 -101)" fill="none" shapeRendering="crispEdges">
        {/* CENTER LINES */}
        <g stroke="#e01c1c" strokeDasharray="14 2 3 2">
          <path d="M481.500 105V322M395 184.500H567M377.500 166V276M315 221.500H440M546.500 210V308M497 259.500H596" />
          <path d="M467.500 340V579M386 494.500H549" />
          <path d="M467.500 494L414 430M467.500 494L523 428" />
          <circle cx="467.500" cy="494.300" r="61.300" />
        </g>

        {/* EXTENSION AND DIMENSION LINES */}
        <g stroke="#22dd22">
          <path d="M567 184.500H620M596 259.500H620M467 433.500H620M300 221.500H315" />
          <path d="M301 360.500H406M512 360.500H604M300 368.500H447M481.500 322V398" />
          <path d="M406.500 360V398M529.500 360V398M436.500 324V360M498.500 324V360" />
          <path d="M467.500 339V347M457 347.500H492M303.500 360V379" />
          <path d="M475 234L359 319M547 259L575 279M565 335L526 315M508 346L520 357" />
          <path d="M556 250L530 276H514M387 467.500H413L431 445M416 426.500H435L424 461" />
          <path d="M467 433L475 452M446 469A33 33 0 0 1 489 469" />
        </g>
        <Dim x1={617.5} y1={184} x2={617.5} y2={259} />
        <Dim x1={617.5} y1={259} x2={617.5} y2={433} />
        <Dim x1={601.5} y1={360} x2={601.5} y2={433} />
        <Dim x1={303.5} y1={221} x2={303.5} y2={360} />
        <Dim x1={406} y1={394.5} x2={481} y2={394.5} />
        <Dim x1={481} y1={394.5} x2={529} y2={394.5} />
        <Dim x1={436} y1={328.5} x2={498} y2={328.5} />
        <Dim x1={420.5} y1={159.5} x2={541.5} y2={209} />
        <Dim x1={340} y1={246.5} x2={414} y2={196.5} />
        <Dim x1={363} y1={212} x2={392} y2={229} />
        <Dim x1={538} y1={267} x2={556} y2={250} />
        <Dim x1={410.5} y1={517.5} x2={524.5} y2={471} />
        <Dim x1={457} y1={438} x2={478} y2={429} />
        <Arw x={359} y={319} a={144} />
        <Arw x={575} y={279} a={36} />
        <Arw x={526} y={315} a={207} />
        <Arw x={520} y={357} a={43} />
        <Arw x={475} y={452} a={68} />
        <Arw x={303.5} y={369} a={-90} />
        <Arw x={467} y={347.5} a={0} />
        <Arw x={481} y={347.5} a={180} />
        <Arw x={427} y={450} a={-52} />
        <Arw x={432} y={436} a={-72} />
        <Arw x={424} y={461} a={108} />
        <Arw x={446} y={470} a={140} />
        <Arw x={489} y={470} a={40} />
        <Arw x={467} y={461.5} a={-5} />
        <Arw x={468} y={461.5} a={185} />

        <path d="M406.500 398V492M529.500 398V492" stroke="#1414d8" strokeDasharray="14 1 3 1" />

        {/* PART OUTLINE */}
        <g stroke="#ffffff">
          <circle cx="481.300" cy="184" r="65.500" />
          <circle cx="377.300" cy="221" r="45" />
          <circle cx="377.300" cy="221" r="16.500" />
          <circle cx="546.700" cy="259.300" r="13.500" />
          <path d="M415 197Q420 210 427 220" />
          <path d="M332 225A143 143 0 0 0 406 360H512" />
          <path d="M525.500 232.500A34.300 34.300 0 1 1 555 292.600A43.700 43.700 0 0 0 522 343Q524 359 509 360.500" />
          <path d="M436.500 360L447 368.500H488.500L498.500 360M447.500 368V433A20.500 20.500 0 0 0 488.500 433V368" />
          <circle cx="467.500" cy="433.300" r="11" />
          <circle cx="428.500" cy="447.300" r="4" />
          <circle cx="507.500" cy="447.300" r="4" />
          <path d="M447 424.500A104 104 0 0 0 416.500 436A16.400 16.400 0 0 0 439 460L453 448.500" />
          <path d="M488 424.500A104 104 0 0 1 519 436A16.400 16.400 0 0 1 496 460L483 448.500" />
        </g>
        <path
          d="M447 424.500Q467 420.500 488 424.500M453 448.500Q467 440 483 448.500"
          stroke="#e6e61e"
          strokeDasharray="9 3"
        />

        {/* DIMENSION TEXT */}
        <g className="fill-[#f01ef0] text-[9px] font-['Liberation_Sans_Narrow','Liberation_Sans',sans-serif]">
          {labels.map(([t, x, y, a], i) => (
            <text key={i} transform={`translate(${x} ${y}) rotate(${a})`}>
              {t}
            </text>
          ))}
        </g>

        {/* UCS ICON */}
        <g stroke="#ffffff">
          <path d="M44.500 583.500H53.500V591.500H44.500ZM49.500 583V540M53 587.500H97" />
          <path d="M44.500 539.500H54.500L49.500 528ZM97.500 583.500V592L109 588Z" fill="#555" />
          <path d="M46 507L51.500 513L57 507M51.500 513V520M119 583L129 595M129 583L119 595" />
        </g>

        {/* CROSSHAIR */}
        <g stroke="#ffffff">
          <path d="M34 589.500H3000M730.500 103V3000" />
          <rect x="727.500" y="586.500" width="6" height="6" />
        </g>
      </g>
    </svg>
  );
}

/* ---------- PAGE DATA ---------- */

const menus = [
  ["文件", "F"],
  ["编辑", "E"],
  ["视图", "V"],
  ["插入", "I"],
  ["格式", "O"],
  ["工具", "T"],
  ["绘图", "D"],
  ["标注", "N"],
  ["修改", "M"],
  ["Express"],
  ["窗口", "W"],
  ["帮助", "H"],
];

const drawTools =
  "line xline pline polygon rect arc circle cloud spline ellipse earc insert mkblock point hatch gradient region table mtext".split(" ");
const modifyTools =
  "erase copyObj mirror offset array move rotate scale stretch trim extend breakPt breakObj join chamfer fillet explode".split(" ");
const orderTools = ["front", "back", "above", "under"];

const modes = [
  ["捕捉", false],
  ["栅格", false],
  ["正交", true],
  ["极轴", false],
  ["对象捕捉", true],
  ["对象追踪", true],
  ["DYN", false],
  ["线宽", false],
  ["模型", true],
];

const tasks = [
  ["acad", "A...", false],
  ["folder", "3 W", true],
  ["target", "A...", false],
  ["word", "3 M", true],
  ["acro", "2 ¯", true],
  ["flame", "A...", false],
  ["page", "学..", false],
  ["excel", "M...", false],
];

const expressTools = [
  ["A B C", 7, <path key="a" d="M2 12.500H16" stroke="#a03030" strokeWidth="2" strokeDasharray="2 1" />],
  ["ABC", 11, <path key="b" d="M2 1L5 4M16 1L13 4M2 15L5 12M16 15L13 12M2 4H16V12H2Z" stroke="#222" fill="#fff" />],
  ["ABCD", 15, <path key="c" d="M4 8L12 1L14 4L7 9ZM13 0L17 1L15 3Z" fill="#c02020" />],
];

/* ---------- BARS ---------- */

function TopBars() {
  return (
    <>
      {/* TITLE */}
      <div className="h-[18px] shrink-0 flex items-center pl-px pr-[3px] bg-linear-to-r from-[#0a246a] to-[#a6caf0] text-white">
        <Icon name="acad" />
        <h1 className="flex-1 pl-[3px] text-[12px] leading-[18px] font-bold whitespace-pre">AutoCAD 2006 - [Drawing1.dwg]</h1>
        <WinButton label="Minimize" d={MIN} />
        <WinButton label="Maximize" d={MAX} />
        <span className="w-[2px]" />
        <WinButton label="Close" d={CLOSE} />
      </div>

      {/* MENU */}
      <nav className="h-[21px] shrink-0 flex items-center pl-1 pr-[3px] border-b border-white">
        <Icon name="dwg" />
        <div className="flex-1 flex">
          {menus.map(([t, k]) => (
            <button key={t} className="px-[6px] leading-5 whitespace-nowrap flex items-center">
              <span className={k ? "" : "text-[10px]"}>{t}</span>
              {k && (
                <span className="text-[10px]">
                  (<u>{k}</u>)
                </span>
              )}
            </button>
          ))}
        </div>
        <WinButton label="Minimize drawing" d={MIN} />
        <WinButton label="Restore drawing" d={RESTORE} />
        <span className="w-[2px]" />
        <WinButton label="Close drawing" d={CLOSE} />
      </nav>

      {/* STANDARD TOOLBAR */}
      <div className="h-[27px] shrink-0 flex items-center border-b border-[#808080] overflow-hidden">
        <Grip />
        <Tools list="new open save | print preview publish | cut copy paste match block | undo" />
        <Arrow className="w-[5px] mx-1 shrink-0 text-[#23476e]" />
        <Tool name="redo" />
        <Arrow className="w-[5px] mx-1 shrink-0 text-[#f4f4f2]" />
        <Tools list="| pan zoom zoomWin zoomPrev | props center palette sheet markup calc | help" />
        <span className="w-[3px] h-full shrink-0 border-r border-[#808080]" />
        <Grip />
        <Tools list="views | vTop vBottom vLeft vRight vFront vBack | isoSW isoSE isoNE isoNW | camera |" />
        <span className={`flex-1 h-5 ${sunken}`} />
      </div>

      {/* LAYERS AND PROPERTIES */}
      <div className="h-[27px] shrink-0 flex items-center border-t border-t-white border-b border-b-[#808080] overflow-hidden">
        <Grip />
        <Tool name="layers" />
        <Combo label="Layer" value="0" className="w-[297px] ml-px mr-px">
          <Icon name="bulb" />
          <Icon name="sun" />
          <Icon name="freeze" />
          <Icon name="lock" />
          <span className="w-[11px] h-[11px] ml-[3px] border border-black shrink-0" />
        </Combo>
        <Tool name="layerMake" />
        <Tool name="layerPrev" />
        <span className="w-1 h-full shrink-0 border-r border-[#808080]" />
        <Grip />
        <Combo label="Color" value="ByLayer" className="w-[147px] ml-[3px]">
          <span className="w-[11px] h-[11px] ml-1 border border-black shrink-0" />
        </Combo>
        <Sep wide />
        <Combo label="Linetype" value="ByLayer" className="w-[158px]">
          <span className="w-[60px] h-px ml-1 bg-black shrink-0" />
        </Combo>
        <Sep wide />
        <Combo label="Lineweight" value="ByLayer" className="w-[123px]">
          <span className="w-[35px] h-px ml-[3px] bg-black shrink-0" />
        </Combo>
        <Sep wide />
        <Combo label="Plot style" value="随颜色" muted className="w-[120px]" />
        <span className="w-1 h-full shrink-0 border-r border-[#808080]" />
      </div>
    </>
  );
}

function SideTools({ names }) {
  return names.map((n) => (
    <button key={n} aria-label={n} className="h-[22px] shrink-0 flex items-center justify-center">
      <Icon name={n} />
    </button>
  ));
}

function Workspace() {
  return (
    <div className="flex-1 min-h-0 flex">
      {/* DRAW */}
      <aside className="w-[25px] shrink-0 flex flex-col overflow-hidden border-r border-[#808080]">
        <div className="flex flex-col shrink-0 pt-px pb-[6px] border-b border-[#808080]">
          <GripH />
          <SideTools names={drawTools} />
        </div>
        <div className="flex flex-col border-t border-white pt-px">
          <GripH />
          {expressTools.map(([t, y, art]) => (
            <button key={t} aria-label={t} className="h-[22px] shrink-0 flex items-center justify-center">
              <svg width="18" height="16" viewBox="0 0 18 16" aria-hidden="true">
                {art}
                <text
                  x="9"
                  y={y}
                  textAnchor="middle"
                  className="text-[7px] font-bold font-['Liberation_Sans_Narrow','Liberation_Sans',sans-serif]"
                >
                  {t}
                </text>
              </svg>
            </button>
          ))}
        </div>
      </aside>

      {/* CANVAS */}
      <main className="flex-1 min-w-0 flex flex-col border-t-2 border-l-2 border-[#606060] border-r-2 border-r-white border-b-2 border-b-white">
        <div className="flex-1 min-h-0 flex">
          <div className="flex-1 min-w-0 overflow-hidden">
            <Drawing />
          </div>
          <div className={`w-4 flex flex-col ${track}`}>
            <button aria-label="Scroll up" className={`h-4 flex items-center justify-center ${raised}`}>
              <Arrow dir="up" />
            </button>
            <span className="flex-1" />
            <span className={`h-[15px] ${raised}`} />
            <button aria-label="Scroll down" className={`h-4 flex items-center justify-center ${raised}`}>
              <Arrow dir="down" />
            </button>
          </div>
        </div>
        <div className="h-[15px] shrink-0 flex">
          {["first", "left", "right", "last"].map((d) => (
            <button key={d} aria-label={`Tab ${d}`} className={`w-[18px] flex items-center justify-center ${raised}`}>
              <Arrow dir={d} />
            </button>
          ))}
          <button className="ml-[3px] w-[38px] bg-black text-white leading-[14px] [clip-path:polygon(0_0,100%_0,100%_0,95%_100%,15%_100%)]">
            模型
          </button>
          {["1", "2"].map((n) => (
            <button key={n} className="h-full flex items-center leading-[14px]">
              <span className="pl-[5px] border-b border-black h-full">
                布局<span className="text-[10px]">{n}</span>
              </span>
              <svg width="8" height="15" viewBox="0 0 8 15" aria-hidden="true">
                <path d="M0 14.500H1L7 0" fill="none" stroke="#000" />
              </svg>
            </button>
          ))}
          <span className="flex-1 border-r border-r-[#404040]" />
          <span className={`w-[6px] ${raised}`} />
          <div className={`w-[314px] mr-4 flex ${track}`}>
            <button aria-label="Scroll left" className={`w-4 flex items-center justify-center ${raised}`}>
              <Arrow dir="left" />
            </button>
            <span className="flex-1" />
            <span className={`w-[15px] mr-[112px] ${raised}`} />
            <button aria-label="Scroll right" className={`w-4 flex items-center justify-center ${raised}`}>
              <Arrow dir="right" />
            </button>
          </div>
        </div>
      </main>

      {/* MODIFY */}
      <aside className="w-[26px] shrink-0 overflow-hidden">
        <div className="flex flex-col pt-px pb-[5px] border-b border-r border-[#808080]">
          <GripH />
          <SideTools names={modifyTools} />
        </div>
        <div className="flex flex-col pt-px pb-1 border-t border-t-white border-b border-r border-b-[#808080] border-r-[#808080]">
          <GripH />
          <SideTools names={orderTools} />
        </div>
      </aside>
    </div>
  );
}

function ViewBar() {
  return (
    <div className="h-[33px] shrink-0 flex flex-col border-b border-black">
      <div className="h-[30px] w-[960px] max-w-full flex items-center border-t border-t-white border-b border-b-[#808080] border-r border-r-[#808080] overflow-hidden">
        <Grip />
        <Tools list="pan zoom globe globe2 swivel distance orbit clip plane |" />
        <Combo label="Named view" value="" className="w-[138px] ml-px" />
        <span className="w-1 h-full shrink-0 border-r border-[#808080]" />
        <Grip />
        <span className="w-[2px]" />
        <Tools list="wire2d wire3d hidden flat gouraud flatEdge gouraudEdge" />
        <span className="w-1 h-full shrink-0 border-r border-[#808080]" />
        <Grip />
        <Tool name="chart" />
        <span className="w-1 h-full shrink-0 border-r border-[#808080]" />
        <Grip />
        <Tools list="ucs ucsDlg | ucsPrev | ucsWorld ucsObj ucsFace ucsView | ucsOrigin ucs ucsPrev ucs ucs ucsObj ucs" />
      </div>
    </div>
  );
}

// Chinese runs and Latin runs have their own sizes
function CmdText({ text }) {
  const runs = text.match(/[\u4e00-\u9fff]+|[^\u4e00-\u9fff]+/g);
  return (
    <p className="h-[15px] flex items-center">
      {runs.map((r, i) => (
        <span key={i} className={/[\u4e00-\u9fff]/.test(r) ? "" : "text-[14px]"}>
          {r}
        </span>
      ))}
    </p>
  );
}

function CommandArea() {
  return (
    <div className="h-[56px] shrink-0 flex pt-[5px] pb-[3px] border-b border-white">
      <span className="flex gap-px ml-[6px] mr-[3px] my-[2px]">
        <span className="w-[3px] border-l border-white border-r border-r-[#808080]" />
        <span className="w-[3px] border-l border-white border-r border-r-[#808080]" />
      </span>
      <div className="flex-1 min-w-0 bg-white border-t border-l border-black text-[15px] leading-[15px] overflow-hidden">
        <div className="h-[31px] pl-[2px] whitespace-pre border-b border-[#808080]">
          <CmdText text="指定窗口的角点, 输入比例因子 (nX 或 nXP), 或者" />
          <CmdText text="[全部(A)/中心(C)/动态(D)/范围(E)/上一个(P)/比例(S)/窗口(W)/对象(O)] <实时>: a" />
        </div>
        <label className="flex h-[15px] pl-[2px]">
          <CmdText text="命令:" />
          <input aria-label="Command" className="flex-1 min-w-0 outline-none text-[14px]" />
        </label>
      </div>
      <div className={`w-4 h-[31px] mr-[8px] shrink-0 flex flex-col ${track}`}>
        <button aria-label="History up" className={`h-[15px] flex items-center justify-center ${raised}`}>
          <Arrow dir="up" />
        </button>
        <button aria-label="History down" className={`h-4 flex items-center justify-center ${raised}`}>
          <Arrow dir="down" />
        </button>
      </div>
    </div>
  );
}

function StatusBar() {
  return (
    <div className="h-[27px] shrink-0 flex items-center pl-[5px] gap-1">
      <output className="w-[250px] h-[18px] px-px text-[10px] leading-4 whitespace-pre border border-t-[#808080] border-l-[#808080] border-b-white border-r-white">
        375.8316, 9.1692  , 0.0000
      </output>
      {modes.map(([t, on]) => (
        <button
          key={t}
          aria-pressed={on}
          className={`h-[18px] px-px leading-4 border whitespace-nowrap ${t === "DYN" ? "text-[10px]" : ""} ${
            on
              ? "border-t-black border-l-black border-r-white border-b-white"
              : "border-t-white border-l-white border-r-[#808080] border-b-[#808080]"
          }`}
        >
          {t}
        </button>
      ))}
      <span className="flex-1" />
      <span className="h-[18px] w-[44px] flex items-center justify-around border border-t-[#808080] border-l-[#808080] border-b-white border-r-white">
        <Icon name="warn" />
        <Icon name="padlock" />
      </span>
      <button aria-label="Status bar menu" className="w-[10px] flex justify-center">
        <Arrow />
      </button>
      <svg width="14" height="14" viewBox="0 0 14 14" className="self-end mb-1" aria-hidden="true">
        <path d="M2 13L13 2M6 13L13 6M10 13L13 10" stroke="#808080" strokeWidth="1.500" />
      </svg>
    </div>
  );
}

function Taskbar() {
  return (
    <footer className="h-[29px] shrink-0 flex items-center px-[2px] border-t border-white bg-[#d4d0c8]">
      <button className={`w-[47px] h-[22px] shrink-0 flex items-center justify-center gap-[2px] ${raised}`}>
        <Icon name="flag" />
        <span>开始</span>
      </button>
      <span className="w-[7px] shrink-0" />
      <Sep />
      <Tools list="ie desk folderFind media" />
      <span className="w-[26px] shrink-0" />
      <span className="w-[16px] shrink-0 text-center font-bold leading-4">»</span>
      <Sep />
      <div className="flex gap-1 shrink-0">
        {tasks.map(([icon, t, more], i) => (
          <button
            key={i}
            className={`w-[49px] h-[22px] flex items-center gap-[3px] pl-[3px] text-[10px] whitespace-pre ${
              i === 0 ? `${sunken} ${track}` : raised
            }`}
          >
            <Icon name={icon} />
            <span className="flex items-center">
              <span className={more ? "font-bold" : ""}>{t}</span>
              {more && <Arrow className="w-[5px] shrink-0" />}
            </span>
          </button>
        ))}
      </div>
      <span className="w-[12px] shrink-0" />
      <Sep />
      <Tool name="keyboard" />
      <Sep />
      <span className="pl-[3px] whitespace-nowrap">桌面</span>
      <span className="w-[22px] shrink-0 text-center font-bold leading-4">»</span>
      <Sep wide />
      <input
        aria-label="Search"
        placeholder="键入并搜索"
        className={`w-[103px] h-5 px-[3px] shrink-0 bg-white placeholder:text-[#606060] outline-none ${sunken}`}
      />
      <button aria-label="Search options" className="w-5 shrink-0 flex justify-center">
        <Arrow />
      </button>
      <span className="w-2 h-2 mx-[3px] shrink-0 border border-t-2 border-black" />
      <span className="flex-1" />
      <div className="h-[22px] pl-1 pr-[6px] shrink-0 flex items-center gap-[2px] border border-t-[#808080] border-l-[#808080] border-b-white border-r-white">
        <span className="w-2 mr-[3px] font-bold leading-4">«</span>
        <Icon name="acro" />
        <Icon name="kis" />
        <Icon name="net" />
        <Icon name="power" />
        <Icon name="swirl" />
        <time className="text-[10px] pl-1">18:16</time>
      </div>
    </footer>
  );
}

function Balloon() {
  return (
    <div
      role="dialog"
      aria-label="通讯中心"
      className="absolute right-[29px] bottom-[64px] w-[184px] h-[74px] pt-[7px] pl-[9px] pr-[7px] rounded-[12px] border border-black bg-[#ffffe1]"
    >
      <div className="flex items-center">
        <Icon name="info" />
        <h2 className="flex-1 pl-[9px] font-bold leading-4">通讯中心</h2>
        <button aria-label="Close" className={`w-4 h-4 flex items-center justify-center ${raised}`}>
          <svg width="8" height="8" viewBox="0 0 8 8" aria-hidden="true">
            <path d="M1 1L7 7M7 1L1 7" stroke="#000" strokeWidth="2" />
          </svg>
        </button>
      </div>
      <p className="pl-[6px] pt-[5px] leading-[17px] whitespace-nowrap">使软件保持最新的简单方法。</p>
      <a href="#update" className="ml-[6px] leading-[18px] text-[#0000ff] underline">
        单击此处。
      </a>
      <svg width="22" height="22" viewBox="0 0 22 22" className="absolute right-[40px] top-[72px]" aria-hidden="true">
        <path d="M2 0L20 20V0Z" fill="#ffffe1" />
        <path d="M2 0L20 20V0" fill="none" stroke="#000" />
      </svg>
    </div>
  );
}

export default function App() {
  return (
    <div className="relative h-screen min-h-[640px] flex flex-col overflow-hidden bg-[#a5a2a0] text-[12px] text-black font-['DejaVu_Sans_Mono','Noto_Sans_CJK_SC',monospace]">
      <svg width="0" height="0" className="absolute" aria-hidden="true">
        <defs>
          <linearGradient id="ice" x1="0" y1="0" x2="1" y2="1">
            <stop offset="0" stopColor="#ffffff" />
            <stop offset="1" stopColor="#a9cdec" />
          </linearGradient>
          <radialGradient id="ball" cx="0.35" cy="0.3" r="0.7">
            <stop offset="0" stopColor="#b4d6f2" />
            <stop offset="1" stopColor="#245a92" />
          </radialGradient>
        </defs>
      </svg>

      <div className="flex-1 min-h-0 flex flex-col mt-[3px] mx-[3px] px-[2px] pt-[2px] bg-[#d4d0c8] border border-t-white border-l-white border-r-[#404040] border-b-[#606060]">
        <TopBars />
        <Workspace />
        <ViewBar />
        <CommandArea />
        <StatusBar />
      </div>
      <Taskbar />
      <Balloon />
    </div>
  );
}
